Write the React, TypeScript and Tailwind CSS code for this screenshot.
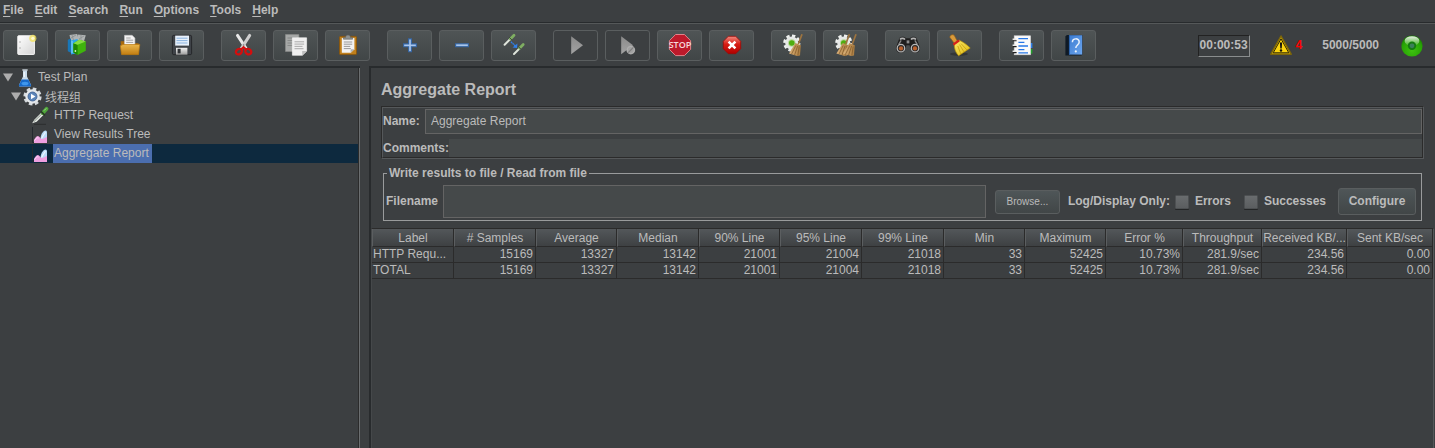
import React from "react";

/* ---------- shared gradients ---------- */

function Gradients() {
  return (
    <svg className="absolute h-0 w-0" aria-hidden="true">
      <defs>
        <linearGradient id="paper" x1="0" y1="0" x2="1" y2="1">
          <stop offset="0" stopColor="#ffffff" />
          <stop offset="1" stopColor="#d4d4d4" />
        </linearGradient>
        <linearGradient id="folder" x1="0" y1="0" x2="0" y2="1">
          <stop offset="0" stopColor="#e9b64c" />
          <stop offset="1" stopColor="#c17d11" />
        </linearGradient>
        <linearGradient id="steel" x1="0" y1="0" x2="0" y2="1">
          <stop offset="0" stopColor="#f2f2f2" />
          <stop offset="1" stopColor="#9c9c9c" />
        </linearGradient>
        <linearGradient id="blueBook" x1="0" y1="0" x2="1" y2="1">
          <stop offset="0" stopColor="#3b7bd0" />
          <stop offset="1" stopColor="#6ba5ee" />
        </linearGradient>
        <linearGradient id="grayPlay" x1="0" y1="0" x2="0" y2="1">
          <stop offset="0" stopColor="#8b8b8b" />
          <stop offset="1" stopColor="#a2a2a2" />
        </linearGradient>
        <linearGradient id="straw" x1="0" y1="0" x2="1" y2="1">
          <stop offset="0" stopColor="#fbea6a" />
          <stop offset="1" stopColor="#dfb90f" />
        </linearGradient>
        <linearGradient id="bristle" x1="0" y1="0" x2="1" y2="0">
          <stop offset="0" stopColor="#dcb27a" />
          <stop offset="1" stopColor="#a87a3e" />
        </linearGradient>
        <linearGradient id="redBall" x1="0" y1="0" x2="0" y2="1">
          <stop offset="0" stopColor="#f08a80" />
          <stop offset="0.45" stopColor="#d81e14" />
          <stop offset="1" stopColor="#b00000" />
        </linearGradient>
        <radialGradient id="greenBall" cx="0.5" cy="0.7" r="0.7">
          <stop offset="0" stopColor="#3fc210" />
          <stop offset="0.7" stopColor="#27a305" />
          <stop offset="1" stopColor="#157000" />
        </radialGradient>
        <linearGradient id="gloss" x1="0" y1="0" x2="0" y2="1">
          <stop offset="0" stopColor="#ffffff" stopOpacity="0.9" />
          <stop offset="1" stopColor="#ffffff" stopOpacity="0.1" />
        </linearGradient>
      </defs>
    </svg>
  );
}

/* ---------- toolbar icons, drawn in button coordinates ---------- */

function Gear({ cx, cy }: { cx: number; cy: number }) {
  return (
    <g>
      <circle cx={cx} cy={cy} r="7.3" fill="none" stroke="#eef0ee" strokeWidth="2.6" strokeDasharray="3.3 2.43" />
      <circle cx={cx} cy={cy} r="6.6" fill="#e6e8e6" />
      <circle cx={cx} cy={cy} r="3.8" fill="#b9d69a" />
      <circle cx={cx} cy={cy} r="2.8" fill="#4fae10" />
    </g>
  );
}

function SmallBroom({ x }: { x: number }) {
  return (
    <g transform={`translate(${x} 0)`}>
      <path d="M31 4.3 27.4 14" stroke="#9d7440" strokeWidth="1.7" />
      <path d="M24.4 13 29.8 15.2 29 25.5 26.2 26 18 23.4 Z" fill="url(#bristle)" />
      <path d="M24.8 15.5 20.6 24M26.6 16 23.6 25M28.2 16.5 26.8 25.6" stroke="#7d5626" strokeWidth="0.7" />
    </g>
  );
}

const icons: Record<string, React.ReactNode> = {
  new: (
    <>
      <rect x="14.8" y="5.8" width="16.6" height="18.6" rx="0.6" fill="url(#paper)" stroke="#f8f8f8" />
      <path d="M16.5 12h1M16.5 18h1" stroke="#777" strokeWidth="1.2" />
      <circle cx="29.8" cy="8.3" r="3.6" fill="#f3e25a" opacity="0.75" />
      <circle cx="29.8" cy="8.3" r="1.6" fill="#fffbd0" />
    </>
  ),
  templates: (
    <>
      <path d="M14.5 5 22 4l1 6-7 2ZM22.500 4.500l8.300.800-1.800 6-6.500 2Z" fill="#b0b4b4" />
      <path d="M16 8l5-3M24 9l5-3M17 5l1.500 5M26 5v5" stroke="#8e9393" strokeWidth="0.9" />
      <path d="M12.800 9.800 16 8.600v14.200l-3.200-1.600Z" fill="#1877b8" />
      <path d="M16 10.500 22.600 9v14l-6.600 1.500Z" fill="#2aa5ea" />
      <path d="M17 11v12" stroke="#8fd4fa" />
      <path d="m18.400 13.200 6-3.400 6.400 1.600v9.400L22.600 25l-4.200-2.600Z" fill="#3fb40d" />
      <path d="m18.400 13.200 4.200 1.600V25l-4.200-2.600Z" fill="#1f8403" />
      <path d="m22.600 14.800 8.200-3.400-6.400-1.600-6 3.400Z" fill="#86dd45" />
      <circle cx="20.4" cy="21" r="0.9" fill="#d6f5bd" />
    </>
  ),
  open: (
    <>
      <path d="M13.6 11.2h6l1.4 2h10.6v11.3h-17Z" fill="#a96a0c" />
      <path d="M17.5 5.3h7.6l2.8 2.8V17H17.5Z" fill="#f3f3f3" stroke="#c2c2c2" strokeWidth="0.6" />
      <path d="M19.2 8h4.5M19.2 10.2h7M19.2 12.4h7" stroke="#9a9a9a" strokeWidth="0.9" />
      <path d="M13.3 15.8 16 14.5h16.8l-1.3 10.1H14.6Z" fill="url(#folder)" stroke="#b97810" strokeWidth="0.7" />
    </>
  ),
  save: (
    <>
      <rect x="13.4" y="5.3" width="19.2" height="19.4" rx="1.4" fill="#3f4348" stroke="#1f2123" strokeWidth="0.8" />
      <rect x="16.2" y="5.6" width="13.8" height="10" fill="#e8f1fb" />
      <path d="M17.5 8.2h11M17.5 10.6h11M17.5 13h11" stroke="#8bb3df" strokeWidth="1" />
      <rect x="17" y="17.8" width="11.4" height="6.9" fill="url(#steel)" />
      <rect x="18.6" y="18.8" width="3" height="4.6" fill="#2f3236" />
    </>
  ),
  cut: (
    <>
      <path d="M16.5 5.4 25 18.4" stroke="#e8e8e8" strokeWidth="3" strokeLinecap="round" />
      <path d="M28.700 5.400 20.400 18.400" stroke="#cfcfcf" strokeWidth="3" strokeLinecap="round" />
      <circle cx="22.6" cy="15" r="0.8" fill="#777" />
      <ellipse cx="17.9" cy="21.600" rx="3.200" ry="2.600" fill="none" stroke="#d40e0e" strokeWidth="2.300" transform="rotate(-35 17.9 21.6)" />
      <ellipse cx="27.3" cy="21.600" rx="3.200" ry="2.600" fill="none" stroke="#d40e0e" strokeWidth="2.300" transform="rotate(35 27.3 21.6)" />
      <path d="m20 19.600 2.600-2.400 2.600 2.400" fill="none" stroke="#d40e0e" strokeWidth="2" />
    </>
  ),
  copy: (
    <>
      <path d="M12.5 4.5h13.4v17H12.5Z" fill="#a5a7a6" stroke="#8b8d8c" strokeWidth="0.6" />
      <path d="M14.5 8h9M14.5 10.5h9M14.5 13h9M14.5 15.5h9" stroke="#7f8180" strokeWidth="0.8" />
      <path d="M19.4 7.8h14.2v13.4l-4.2 4.1h-10Z" fill="#efefef" stroke="#fafafa" strokeWidth="0.6" />
      <path d="M21.5 11.8h9.6M21.5 14.1h9.6M21.5 16.4h8M21.5 18.7h9" stroke="#a3a3a3" strokeWidth="0.9" />
      <path d="M29.2 25.3v-4.2h4.4Z" fill="#bdbdbd" />
    </>
  ),
  paste: (
    <>
      <rect x="14.5" y="6.4" width="17" height="18.2" rx="0.8" fill="#bf7f1c" stroke="#8c5607" strokeWidth="0.8" />
      <path d="M16.8 8h12.6v11.2l-3.5 3.6h-9.1Z" fill="#f2f2f2" />
      <path d="M18.8 12h8.4M18.8 14.2h8.4M18.8 16.4h6.4M18.8 18.6h7" stroke="#8e8e8e" strokeWidth="0.9" />
      <path d="M25.6 22.8v-3.6h3.8Z" fill="#b2b2b2" />
      <path d="M18.4 9.2V7.4h2.2c0-1.6 1-2.4 2.4-2.4s2.4.8 2.4 2.4h2.2v1.8Z" fill="#8f9291" stroke="#5d605f" strokeWidth="0.6" />
    </>
  ),
  plus: (
    <path d="M21.6 8.9h2.8v5h5v2.8h-5v5h-2.8v-5h-5v-2.8h5Z" fill="#a9c6ec" stroke="#3465a4" strokeWidth="1.1" />
  ),
  minus: <rect x="16.6" y="13.8" width="12.8" height="2.9" fill="#a9c6ec" stroke="#3465a4" strokeWidth="1.1" />,
  toggle: (
    <>
      <path d="m13.6 14.8 6-6" stroke="#dfe5dc" strokeWidth="2" strokeLinecap="round" />
      <path d="m19.4 9 3.6-3.8" stroke="#7fae62" strokeWidth="2.8" strokeLinecap="round" />
      <path d="m18 7 3.2 3.2" stroke="#41513a" strokeWidth="1" />
      <path d="m20 11.8 4.2 4" stroke="#2f80ea" strokeWidth="1.4" strokeDasharray="1.6 0.6" />
      <path d="m26.4 13.4-.3 4.6-4.6-.6Z" fill="#2f80ea" />
      <path d="m23 24 6-6" stroke="#dfe5dc" strokeWidth="2" strokeLinecap="round" />
      <path d="m28.6 18.2 3.6-3.6" stroke="#7fae62" strokeWidth="2.8" strokeLinecap="round" />
      <path d="m27.2 16.4 3.2 3.2" stroke="#41513a" strokeWidth="1" />
    </>
  ),
  start: <path d="M18.2 6.2 30 15.2 18.2 24.2Z" fill="url(#grayPlay)" />,
  startNoPause: (
    <>
      <path d="M16.2 6.2 28 15.2 16.2 24.2Z" fill="url(#grayPlay)" />
      <circle cx="25.8" cy="20" r="4.4" fill="#a1a1a1" />
      <circle cx="25.8" cy="20" r="3.6" fill="none" stroke="#b4b4b4" strokeWidth="0.8" />
      <path d="m23.2 22.6 5.2-5.2" stroke="#7d7d7d" strokeWidth="1.2" />
    </>
  ),
  stop: (
    <>
      <path d="M18.6 4.5h8.8l6.2 6.2v8.7l-6.2 6.2h-8.8l-6.2-6.2v-8.7Z" fill="#bd1a2b" stroke="#e0838b" strokeWidth="1" />
      <text
        x="23"
        y="18.4"
        textAnchor="middle"
        fill="#f6d9dc"
        className="font-['Liberation_Sans_Narrow','Open_Sans',sans-serif] text-[9px] font-semibold"
      >
        STOP
      </text>
    </>
  ),
  shutdown: (
    <>
      <path d="M19.3 6.3h7.4l5 5v7.4l-5 5h-7.4l-5-5v-7.4Z" fill="url(#redBall)" stroke="#9c0a06" strokeWidth="0.8" />
      <path d="m19.6 11.6 6.8 6.8M26.4 11.6l-6.800 6.800" stroke="#fff" strokeWidth="2.6" />
    </>
  ),
  clear: (
    <>
      <Gear cx={20.8} cy={13} />
      <SmallBroom x={0} />
    </>
  ),
  clearAll: (
    <>
      <Gear cx={20.8} cy={13} />
      <SmallBroom x={-4.6} />
      <SmallBroom x={2} />
    </>
  ),
  search: (
    <g transform="translate(23 15.2) scale(1.14) translate(-23 -15.6)">
      <path
        d="M15.4 9.5c1.2-1.8 4.6-1.8 5.8 0h3.6c1.2-1.8 4.6-1.8 5.8 0l3 8.4c0 6-8 6-8.6.2l-.6-2.4h-2.800l-.6 2.400c-.6 5.800-8.600 5.800-8.600-.2Z"
        fill="#1e1e1e"
      />
      <path d="M16 10.6c1-1.2 3.200-1.200 4.400 0M25.600 10.600c1-1.200 3.200-1.200 4.400 0" stroke="#b4b4b4" strokeWidth="1.5" fill="none" />
      <path d="M14.800 15 17 11.400M31.200 15l-2.200-3.600" stroke="#8a8a8a" strokeWidth="1.200" />
      <circle cx="16.8" cy="18.2" r="3.3" fill="#2a2a2a" stroke="#b8b8b8" strokeWidth="1.1" />
      <circle cx="29.2" cy="18.2" r="3.3" fill="#2a2a2a" stroke="#b8b8b8" strokeWidth="1.1" />
      <circle cx="16.9" cy="18.4" r="1.9" fill="#b8602c" />
      <circle cx="29.1" cy="18.4" r="1.9" fill="#b8602c" />
      <rect x="21.8" y="11.4" width="2.4" height="2.6" fill="#8c8c8c" />
    </g>
  ),
  searchReset: (
    <>
      <ellipse cx="22" cy="24" rx="9" ry="1.8" fill="#000" opacity="0.25" />
      <path
        d="M13.600 5.400c1.600-1.400 3.800-.8 4.200 1l2.600 4.800-3.200 2-3.400-4.600c-1.200-.8-1.200-2.200-.2-3.200Z"
        fill="#d99a3a"
        stroke="#94601a"
        strokeWidth="0.7"
      />
      <path
        d="m17.200 13.600 5-3.400c4 1.800 7.400 4.200 11 7.800l-11.600 7.800c-3.200-3.200-4.400-7.600-4.400-12.200Z"
        fill="url(#straw)"
        stroke="#b99307"
        strokeWidth="0.7"
      />
      <path d="m20.800 16 3 8M22.600 14.600l4.400 7.400M24 13.600l6 6.400" stroke="#c9a00c" strokeWidth="0.8" />
      <path d="m16.400 14.600 5.800-4.200" stroke="#d8201a" strokeWidth="2.4" />
    </>
  ),
  functions: (
    <>
      <path d="M31 13h2.400v5H31Z" fill="#2f80ea" />
      <path d="M31 19h2.400v4.600H31Z" fill="#22a02c" />
      <rect x="15.2" y="5.8" width="16.4" height="19" fill="#fbfbfb" stroke="#d7d7d7" strokeWidth="0.6" />
      <path d="M19.4 8.6h9.6M19.4 12.3h6M19.4 16h9.6M19.4 19.6h6M19.4 22.8h9.6" stroke="#2878e6" strokeWidth="1.3" />
      <path d="M13.6 9.4h3.6M13.6 15.3h3.6M13.6 21.3h3.6" stroke="#e9e9e9" strokeWidth="1.8" />
      <path d="M13.6 10.7h4M13.6 16.6h4M13.6 22.6h4" stroke="#222" strokeWidth="1.1" />
    </>
  ),
  help: (
    <>
      <path d="M14.4 6.2 16 5h15.4v19.4l-1 1.2H14.4Z" fill="#0f1a26" />
      <rect x="18" y="5.2" width="13.2" height="19.4" fill="url(#blueBook)" />
      <path d="M18.4 5.2v19.4" stroke="#2459a0" strokeWidth="0.9" />
      <path d="M21.4 12.2c0-4.4 6.8-4.4 6.8-.2 0 2.8-3.4 3.2-3.4 6" fill="none" stroke="#e9f2fd" strokeWidth="1.5" />
      <circle cx="24.8" cy="21.4" r="1.1" fill="#e9f2fd" />
    </>
  ),
};

type Tool = { icon: string; label: string; disabled?: boolean };

const toolGroups: Tool[][] = [
  [
    { icon: "new", label: "New" },
    { icon: "templates", label: "Templates" },
    { icon: "open", label: "Open" },
    { icon: "save", label: "Save" },
  ],
  [
    { icon: "cut", label: "Cut" },
    { icon: "copy", label: "Copy" },
    { icon: "paste", label: "Paste" },
  ],
  [
    { icon: "plus", label: "Expand All" },
    { icon: "minus", label: "Collapse All" },
    { icon: "toggle", label: "Toggle" },
  ],
  [
    { icon: "start", label: "Start", disabled: true },
    { icon: "startNoPause", label: "Start no pauses", disabled: true },
    { icon: "stop", label: "Stop" },
    { icon: "shutdown", label: "Shutdown" },
  ],
  [
    { icon: "clear", label: "Clear" },
    { icon: "clearAll", label: "Clear All" },
  ],
  [
    { icon: "search", label: "Search" },
    { icon: "searchReset", label: "Reset Search" },
  ],
  [
    { icon: "functions", label: "Function Helper" },
    { icon: "help", label: "Help" },
  ],
];

const menus = ["File", "Edit", "Search", "Run", "Options", "Tools", "Help"];

function ToolButton({ icon, label, disabled }: Tool) {
  return (
    <button
      type="button"
      aria-label={label}
      disabled={disabled}
      className="h-[31px] w-[45px] shrink-0 rounded-[3px] border border-[#5a5e5f] bg-linear-to-b from-[#4f5455] to-[#414647] disabled:bg-none"
    >
      <svg viewBox="1 1 43 29" className="block h-[29px] w-[43px]" aria-hidden="true">
        {icons[icon]}
      </svg>
    </button>
  );
}

function Toolbar() {
  return (
    <div className="flex items-start border-t border-[#555859] pt-[6px] pr-3 pb-[5px] pl-[3px]">
      <div className="flex gap-[17px]">
        {toolGroups.map((group, i) => (
          <div key={i} className="flex gap-[7px]">
            {group.map((tool) => (
              <ToolButton key={tool.icon} {...tool} />
            ))}
          </div>
        ))}
      </div>
      <div className="ml-auto flex h-[31px] items-center font-bold">
        <output className="border border-t-[#222] border-r-[#8a8d8e] border-b-[#8a8d8e] border-l-[#222] px-px pt-px pb-[3px] leading-4">
          00:00:53
        </output>
        <svg viewBox="0 0 22 21" className="ml-5 h-[21px] w-[22px]" aria-hidden="true">
          <path d="M11 1 21.2 19.2H.8Z" fill="#f4c80e" stroke="#7d6608" strokeWidth="1.5" strokeLinejoin="round" />
          <path d="M11 3.8 18.8 17.8H3.2Z" fill="#fbd40e" stroke="#2b2505" strokeWidth="1" />
          <path d="M9.9 7.6h2.2l-.4 5.8h-1.4Z" fill="#111" />
          <circle cx="11" cy="15.5" r="1.2" fill="#111" />
        </svg>
        <span className="ml-1 pb-[2px] text-[#ff0000]">4</span>
        <span className="ml-5 pb-[2px]">5000/5000</span>
        <svg viewBox="0 0 22 22" className="ml-[22px] h-[22px] w-[22px]" aria-hidden="true">
          <circle cx="11" cy="11" r="10.6" fill="url(#greenBall)" />
          <ellipse cx="11" cy="6" rx="7.4" ry="4.8" fill="url(#gloss)" />
          <circle cx="11" cy="10.800" r="4.2" fill="#157a12" />
          <circle cx="11" cy="10.800" r="2.4" fill="#3b7f5a" />
        </svg>
      </div>
    </div>
  );
}

/* ---------- test plan tree ---------- */

function Arrow() {
  return (
    <svg viewBox="0 0 10 9" className="h-[9px] w-[10px] shrink-0" aria-hidden="true">
      <path d="M0 .5h10L5 8.5Z" fill="#adadad" />
    </svg>
  );
}

function FlaskIcon() {
  return (
    <svg viewBox="0 0 14 18" className="h-[18px] w-[14px] shrink-0" aria-hidden="true">
      <path d="M5 1.5v6L1 16c-.3.8.2 1.5 1 1.5h10c.8 0 1.3-.7 1-1.5L9 7.5v-6Z" fill="#c9dcec" />
      <path d="M3.6 10.5h6.8L13 16c.3.8-.2 1.5-1 1.5H2c-.8 0-1.3-.7-1-1.5Z" fill="#1769c9" />
      <ellipse cx="7" cy="14.5" rx="3.5" ry="1.8" fill="#3f97ee" />
      <path d="M4.3 1h5.4" stroke="#e4eef6" strokeWidth="1.2" />
      <path d="M6.2 3v5" stroke="#fff" />
    </svg>
  );
}

function GearIcon() {
  return (
    <svg viewBox="0 0 19 19" className="h-[19px] w-[19px] shrink-0" aria-hidden="true">
      <circle cx="9.5" cy="9.5" r="7.8" fill="none" stroke="#d6dade" strokeWidth="2.6" strokeDasharray="3.6 2.526" />
      <circle cx="9.5" cy="9.5" r="7.2" fill="#e4e7ea" />
      <circle cx="9.5" cy="9.5" r="4.5" fill="#5c84b8" stroke="#3d5f91" strokeWidth="0.8" />
      <path d="M8 6.8 12.4 9.5 8 12.2Z" fill="#fff" />
    </svg>
  );
}

function PipetteIcon() {
  return (
    <svg viewBox="0 0 19 19" className="h-[19px] w-[19px] shrink-0" aria-hidden="true">
      <path d="M3 18.3h12" stroke="#2b2d2e" strokeWidth="1" />
      <path d="M1.2 17.2 3.5 13.5 11 6l2.2 2.2-7.5 7.5Z" fill="#e3e8e3" />
      <path d="M3 15.5 11.8 7" stroke="#6f7a70" strokeWidth="0.8" />
      <path d="m11.8 7 3.8-4.2" stroke="#4fa53a" strokeWidth="3.8" strokeLinecap="round" />
      <path d="m9.8 5.2 4.2 4.2" stroke="#263a22" strokeWidth="1.6" />
      <path d="m13 4.6 2.2-2.2" stroke="#a5dc8c" strokeWidth="1" />
    </svg>
  );
}

function ChartIcon() {
  return (
    <svg viewBox="0 0 16 18" className="h-[18px] w-[16px] shrink-0" aria-hidden="true">
      <path d="M.5 1v15.5h15" fill="none" stroke="#24292e" strokeWidth="1" />
      <path d="M8.5 13c0-4 2.5-8.5 5-8.500 1.200 0 1.500 1 1.500 2v9.500H9Z" fill="#b9dcf8" />
      <path d="M9.5 12.5 13.5 6" stroke="#eef7ff" strokeWidth="1.2" />
      <path d="M2 17v-3c1-2 2.500-4 4-4s2 2.500 3.500 3 3.500-1.500 5.500-2v6Z" fill="#ee9fe0" />
      <path d="M2.5 14.5c1.5-2 3-3.5 4-2.5" fill="none" stroke="#ffe2fa" strokeWidth="1" />
    </svg>
  );
}

function TestTree() {
  return (
    <aside className="w-[360px] shrink-0 border-t-2 border-[#282b2d]">
      <ul
        role="tree"
        aria-label="Test plan"
        className="h-full border-r border-[#6b6e70] leading-[19px] shadow-[inset_-1px_0_0_#2b2b2b]"
      >
        <li role="treeitem" aria-expanded="true" className="flex h-[19px] items-center pl-[3px]">
          <Arrow />
          <span className="ml-[5px] flex">
            <FlaskIcon />
          </span>
          <span className="ml-[6px]">Test Plan</span>
        </li>
        <li role="treeitem" aria-expanded="true" className="flex h-[19px] items-center pl-[11px]">
          <Arrow />
          <span className="ml-[2px] flex">
            <GearIcon />
          </span>
          <span className="ml-[3px] font-['Noto_Sans_CJK_SC',sans-serif]">线程组</span>
        </li>
        <li role="treeitem" className="flex h-[19px] items-center pl-[31px]">
          <PipetteIcon />
          <span className="ml-[3px] px-px">HTTP Request</span>
        </li>
        <li role="treeitem" className="flex h-[19px] items-center pl-8">
          <ChartIcon />
          <span className="ml-[5px] px-px">View Results Tree</span>
        </li>
        <li role="treeitem" aria-selected="true" className="mr-px flex h-[19px] items-center bg-[#0d293e] pl-8">
          <ChartIcon />
          <span className="ml-[5px] bg-[#4b6eaf] pr-[3px] pl-px">Aggregate Report</span>
        </li>
      </ul>
    </aside>
  );
}

/* ---------- report panel ---------- */

const columns = [
  { name: "Label", width: "w-[82px]" },
  { name: "# Samples", width: "w-[82px]" },
  { name: "Average", width: "w-[81px]" },
  { name: "Median", width: "w-[82px]" },
  { name: "90% Line", width: "w-[81px]" },
  { name: "95% Line", width: "w-[82px]" },
  { name: "99% Line", width: "w-[82px]" },
  { name: "Min", width: "w-[81px]" },
  { name: "Maximum", width: "w-[81px]" },
  { name: "Error %", width: "w-[77px]" },
  { name: "Throughput", width: "w-[79px]" },
  { name: "Received KB/...", width: "w-[85px]" },
  { name: "Sent KB/sec", width: "w-[86px]" },
];

const rows = [
  ["HTTP Requ...", "15169", "13327", "13142", "21001", "21004", "21018", "33", "52425", "10.73%", "281.9/sec", "234.56", "0.00"],
  ["TOTAL", "15169", "13327", "13142", "21001", "21004", "21018", "33", "52425", "10.73%", "281.9/sec", "234.56", "0.00"],
];

function ResultsTable() {
  return (
    <div className="mr-px flex-1 border-x border-t border-t-[#2b2b2b] border-r-[#55585a] border-l-[#45484a]">
      <table className="w-full table-fixed border-separate border-spacing-0">
        <colgroup>
          {columns.map((c) => (
            <col key={c.name} className={c.width} />
          ))}
        </colgroup>
        <thead>
          <tr className="h-[18px]">
            {columns.map((c) => (
              <th
                key={c.name}
                scope="col"
                className="overflow-hidden border-r border-b border-l border-r-[#2b2b2b] border-b-[#2b2b2b] border-l-[#5b5e60] bg-linear-to-b from-[#53575a] to-[#3e4143] px-0 pt-[2px] pb-0 leading-[15px] font-normal whitespace-nowrap"
              >
                {c.name}
              </th>
            ))}
          </tr>
        </thead>
        <tbody>
          {rows.map((row) => (
            <tr key={row[0]} className="h-4">
              {row.map((value, i) => (
                <td
                  key={columns[i].name}
                  className="overflow-hidden border-r border-b border-[#2b2b2b] py-0 pr-[2px] pl-px text-right leading-[15px] whitespace-nowrap first:text-left"
                >
                  {value}
                </td>
              ))}
            </tr>
          ))}
        </tbody>
      </table>
    </div>
  );
}

function CheckOption({ label }: { label: string }) {
  return (
    <label className="flex items-center gap-[6px] whitespace-nowrap">
      <input
        type="checkbox"
        className="h-[14px] w-[14px] appearance-none rounded-[1px] border border-[#4d5052] bg-linear-to-b from-[#696c6e] to-[#5b5e60] shadow-[0_1px_0_#232526] checked:from-[#8ab0e0]"
      />
      <span className="pb-[2px]">{label}</span>
    </label>
  );
}

function ReportPanel() {
  return (
    <section className="flex min-w-0 flex-1 flex-col border-t-2 border-l-2 border-[#282b2d]">
      <h1 className="pt-[10px] pb-1 pl-[10px] text-[16px] leading-6 font-bold">Aggregate Report</h1>

      <div className="mr-[11px] ml-[10px] border border-t-[#2b2b2b] border-r-[#55585a] border-b-[#55585a] border-l-[#2b2b2b]">
        <div className="border border-t-[#55585a] border-r-[#2b2b2b] border-b-[#2b2b2b] border-l-[#55585a] pt-px">
          <div className="flex items-center">
            <label htmlFor="name" className="w-[42px] pb-[2px] font-bold">
              Name:
            </label>
            <input
              id="name"
              defaultValue="Aggregate Report"
              className="h-[25px] min-w-0 flex-1 border border-[#646464] bg-[#45494a] px-[5px] pb-[2px] outline-none"
            />
          </div>
          <div className="mt-[5px] flex items-center">
            <label htmlFor="comments" className="font-bold">
              Comments:
            </label>
            <input id="comments" className="h-[18px] min-w-0 flex-1 bg-[#45494a] px-1 outline-none" />
          </div>
        </div>
      </div>

      <fieldset className="mt-[7px] mr-[13px] mb-[7px] ml-3 min-w-0 border border-[#999b9c] font-bold">
        <legend className="ml-[3px] px-[2px] leading-[15px]">Write results to file / Read from file</legend>
        <div className="flex items-center pt-1 pr-[5px] pb-[2px] pl-[2px]">
          <label htmlFor="filename" className="pb-[2px]">
            Filename
          </label>
          <input
            id="filename"
            className="ml-[5px] h-[33px] min-w-0 flex-1 border border-[#646464] bg-[#45494a] px-[5px] font-normal outline-none"
          />
          <button
            type="button"
            className="ml-[9px] h-6 w-[65px] rounded-[3px] border border-[#5a5e5f] bg-linear-to-b from-[#4f5658] to-[#414647] text-[10px] font-normal"
          >
            Browse...
          </button>
          <span className="mr-[5px] ml-2 pb-[2px] whitespace-nowrap">Log/Display Only:</span>
          <div className="flex gap-[13px]">
            <CheckOption label="Errors" />
            <CheckOption label="Successes" />
          </div>
          <button
            type="button"
            className="ml-3 h-[27px] w-[78px] rounded-[3px] border border-[#5a5e5f] bg-linear-to-b from-[#4f5658] to-[#414647] pb-[2px]"
          >
            Configure
          </button>
        </div>
      </fieldset>

      <ResultsTable />
    </section>
  );
}

export default function App() {
  return (
    <div className="flex min-h-screen flex-col bg-[#3c3f41] font-['Liberation_Sans',Arial,'Noto_Sans_CJK_SC',sans-serif] text-[12px] leading-4 text-[#bbbbbb]">
      <Gradients />
      <nav aria-label="Main menu" className="flex h-[23px] gap-[11px] border-b border-[#282b2d] pt-[2px] pl-[3px] font-bold">
        {menus.map((m) => (
          <button key={m} type="button" className="h-4">
            <span className="underline underline-offset-2">{m[0]}</span>
            {m.slice(1)}
          </button>
        ))}
      </nav>
      <Toolbar />
      <main className="flex flex-1 gap-[9px]">
        <TestTree />
        <ReportPanel />
      </main>
    </div>
  );
}
